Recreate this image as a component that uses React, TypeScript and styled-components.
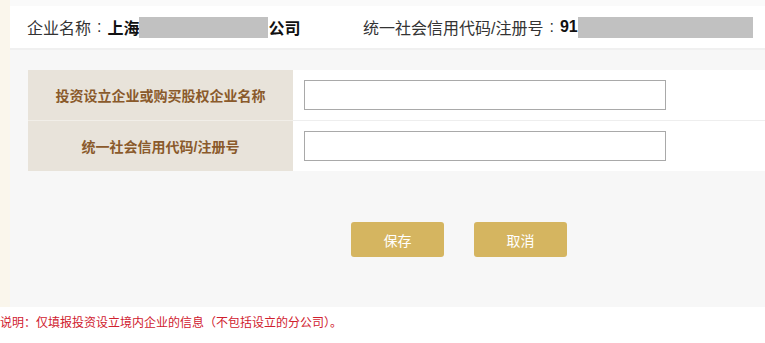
import React from 'react';
import styled, { createGlobalStyle } from 'styled-components';

const GlobalStyle = createGlobalStyle`
  html, body {
    margin: 0;
    padding: 0;
    background: #ffffff;
  }
  body {
    font-family: "Liberation Sans", "Noto Sans CJK SC", sans-serif;
    color: #333;
  }
`;

const Page = styled.div`
  display: flex;
  width: 765px;
  height: 343px;
  overflow: hidden;
`;

const SideStrip = styled.div`
  width: 10px;
  height: 307px;
  flex-shrink: 0;
  background: #faf6ec;
`;

const Main = styled.div`
  flex: 1;
  display: flex;
  flex-direction: column;
`;

const HeaderWrap = styled.div`
  padding-top: 6px;
  background: #fafafa;
`;

const Header = styled.div`
  height: 42px;
  background: #ffffff;
  display: flex;
  align-items: center;
  padding-left: 17px;
  font-size: 16px;
  color: #333;
  border-bottom: 2px solid #f0f0f0;
`;

const HeaderItem = styled.div<{ $width?: number }>`
  display: flex;
  align-items: center;
  width: ${(p) => (p.$width ? `${p.$width}px` : 'auto')};
  flex-shrink: 0;
`;

const Colon = styled.span`
  margin: 0 6px 0 6px;
`;

const Strong = styled.b`
  font-weight: 700;
  color: #111;
`;

const Redacted = styled.span<{ $width: number }>`
  display: inline-block;
  width: ${(p) => p.$width}px;
  height: 21px;
  background: #c1c1c1;
`;

const Panel = styled.div`
  background: #f7f7f7;
  padding: 20px 0 0 18px;
  height: 257px;
  box-sizing: border-box;
  display: flex;
  flex-direction: column;
`;

const Table = styled.div`
  display: grid;
  grid-template-columns: 265px 1fr;
  background: #ffffff;
`;

const LabelCell = styled.div<{ $last?: boolean }>`
  height: 50px;
  background: #e8e3da;
  color: #8a5a2b;
  font-size: 14px;
  font-weight: 700;
  display: flex;
  align-items: center;
  justify-content: center;
  border-bottom: ${(p) => (p.$last ? 'none' : '1px solid #f1eee8')};
`;

const FieldCell = styled.div<{ $last?: boolean }>`
  height: 50px;
  display: flex;
  align-items: center;
  padding-left: 11px;
  border-bottom: ${(p) => (p.$last ? 'none' : '1px solid #eeeeee')};
`;

const Input = styled.input`
  width: 362px;
  height: 30px;
  box-sizing: border-box;
  border: 1px solid #a9a9a9;
  background: #fff;
  outline: none;
`;

const Actions = styled.div`
  display: flex;
  gap: 30px;
  padding-left: 323px;
  margin-top: 51px;
`;

const Button = styled.button`
  width: 93px;
  height: 35px;
  border: none;
  border-radius: 3px;
  background: #d5b560;
  color: #fff;
  font-size: 14px;
  font-family: "Liberation Sans", "Noto Sans CJK SC", sans-serif;
  cursor: pointer;
`;

const Note = styled.div`
  margin-left: -10px;
  padding-top: 6px;
  font-size: 12px;
  color: #d0202e;
`;

export default function App() {
  return (
    <>
      <GlobalStyle />
      <Page>
        <SideStrip />
        <Main>
          <HeaderWrap>
            <Header>
              <HeaderItem $width={336}>
                企业名称<Colon>:</Colon>
                <Strong>上海</Strong>
                <Redacted $width={129} />
                <Strong>公司</Strong>
              </HeaderItem>
              <HeaderItem>
                统一社会信用代码/注册号<Colon>:</Colon>
                <Strong>91</Strong>
                <Redacted $width={175} />
              </HeaderItem>
            </Header>
          </HeaderWrap>
          <Panel>
            <Table>
              <LabelCell>投资设立企业或购买股权企业名称</LabelCell>
              <FieldCell>
                <Input type="text" />
              </FieldCell>
              <LabelCell $last>统一社会信用代码/注册号</LabelCell>
              <FieldCell $last>
                <Input type="text" />
              </FieldCell>
            </Table>
            <Actions>
              <Button>保存</Button>
              <Button>取消</Button>
            </Actions>
          </Panel>
          <Note>说明：仅填报投资设立境内企业的信息（不包括设立的分公司）。</Note>
        </Main>
      </Page>
    </>
  );
}
